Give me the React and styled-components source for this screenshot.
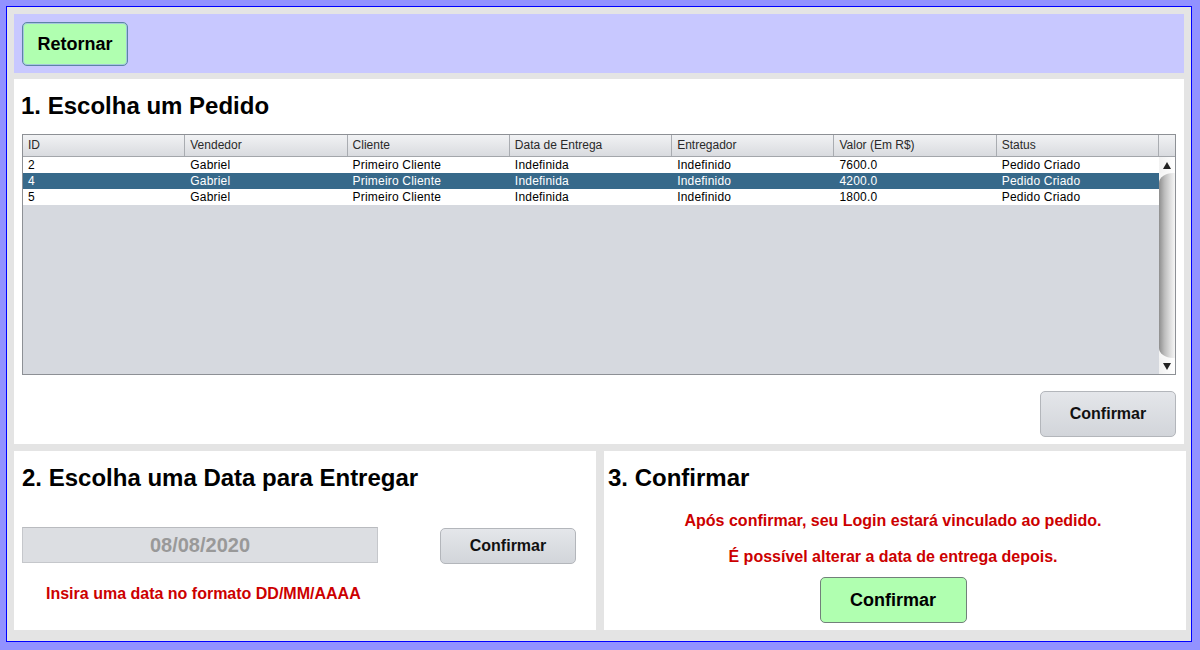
import React from 'react';
import styled, { createGlobalStyle } from 'styled-components';

const GlobalStyle = createGlobalStyle`
  body {
    margin: 0;
    font-family: "Liberation Sans", Arial, sans-serif;
  }
`;

const Frame = styled.div`
  width: 1200px;
  height: 650px;
  box-sizing: border-box;
  padding: 6px 8px 8px 6px;
  background: #9292ff;
`;

const Window = styled.div`
  height: 100%;
  box-sizing: border-box;
  border: 1px solid #0000ff;
  background: #e4e4e4;
  padding: 7px 7px 11px 7px;
  display: flex;
  flex-direction: column;
`;

const TopBar = styled.div`
  height: 59px;
  box-sizing: border-box;
  padding: 8px;
  background: #c8c8ff;
`;

const Panel = styled.div`
  background: #fff;
  box-sizing: border-box;
  padding: 13px 8px 7px ${p => p.$left || 8}px;
  display: flex;
  flex-direction: column;
`;

const OrderPanel = styled(Panel)`
  height: 365px;
  margin-top: 6px;
`;

const BottomRow = styled.div`
  display: grid;
  grid-template-columns: 1fr 1fr;
  gap: 8px;
  height: 179px;
  margin-top: 7px;
  margin-right: -2px;
`;

const Title = styled.h2`
  margin: 0;
  margin-left: ${p => p.$shift || 0}px;
  font-size: 24px;
  line-height: 28px;
  font-weight: bold;
  color: #000;
`;

const GreenButton = styled.button`
  width: ${p => p.$w}px;
  height: ${p => p.$h}px;
  background: #b0ffb0;
  border: 1px solid ${p => (p.$focus ? '#5c84a6' : '#72807a')};
  box-shadow: ${p => (p.$focus ? 'inset 0 0 0 1px #a5c7de' : 'none')};
  border-radius: 5px;
  font-family: "Liberation Sans", Arial, sans-serif;
  font-weight: bold;
  font-size: 18px;
  color: #000;
  padding: 0;
  cursor: pointer;
`;

const GreyButton = styled.button`
  width: 136px;
  height: ${p => p.$h}px;
  background: linear-gradient(#e4e6ea, #d2d5da);
  border: 1px solid #b3b6bb;
  border-radius: 5px;
  font-family: "Liberation Sans", Arial, sans-serif;
  font-weight: bold;
  font-size: 16px;
  color: #111;
  padding: 0;
  cursor: pointer;
`;

const Table = styled.div`
  margin-top: 14px;
  height: 241px;
  box-sizing: border-box;
  border: 1px solid #8d9095;
  display: flex;
  flex-direction: column;
  background: #d6d9df;
`;

const HeaderRow = styled.div`
  display: grid;
  grid-template-columns: repeat(7, 1fr) 16px;
  height: 22px;
  box-sizing: border-box;
  border-bottom: 1px solid #a3a6ab;
  background: linear-gradient(#f1f2f4, #d9dbdf);
`;

const HeaderCell = styled.div`
  border-right: 1px solid #a9acb1;
  padding-left: 5px;
  font-size: 12px;
  line-height: 21px;
  color: #2a2a2a;
  white-space: nowrap;
  overflow: hidden;
`;

const Body = styled.div`
  flex: 1;
  display: flex;
  min-height: 0;
`;

const Rows = styled.div`
  flex: 1;
`;

const Row = styled.div`
  display: grid;
  grid-template-columns: repeat(7, 1fr);
  height: 16px;
  background: ${p => (p.$selected ? '#37698a' : '#fff')};
  color: ${p => (p.$selected ? '#fff' : '#000')};
`;

const Cell = styled.div`
  padding-left: 5px;
  font-size: 12px;
  line-height: 16px;
  letter-spacing: 0.2px;
  white-space: nowrap;
  overflow: hidden;
`;

const ScrollBar = styled.div`
  width: 16px;
  display: flex;
  flex-direction: column;
  background: linear-gradient(to right, #f4f4f4, #ffffff);
`;

const ArrowBox = styled.div`
  height: 16px;
  display: flex;
  align-items: center;
  justify-content: center;
  background: linear-gradient(to right, #f2f2f2, #ffffff);
`;

const Thumb = styled.div`
  flex: 1;
  border-radius: 14px 0 0 14px / 10px 0 0 10px;
  background: linear-gradient(to right, #8e8e8e, #bdbdbd 35%, #e2e2e2 75%, #f6f6f6);
`;

const ConfirmRow = styled.div`
  display: flex;
  justify-content: flex-end;
  margin-top: 16px;
`;

const DateRow = styled.div`
  display: flex;
  align-items: flex-start;
  justify-content: space-between;
  margin-top: 35px;
  padding-right: 12px;
`;

const DateInput = styled.input`
  width: 356px;
  height: 36px;
  box-sizing: border-box;
  margin: 0;
  border: 1px solid #c5c7cb;
  border-top-color: #b9bbbf;
  background: #dcdee2;
  color: #999;
  font-family: "Liberation Sans", Arial, sans-serif;
  font-weight: bold;
  font-size: 20px;
  text-align: center;
  outline: none;
`;

const DateButtonWrap = styled.div`
  margin-top: 1px;
`;

const Warning = styled.p`
  margin: ${p => p.$top}px 0 0 ${p => p.$left || 0}px;
  font-size: 16px;
  line-height: 18px;
  font-weight: bold;
  color: #cc0000;
  text-align: ${p => (p.$center ? 'center' : 'left')};
`;

const CenterButton = styled.div`
  display: flex;
  justify-content: center;
  margin-top: 11px;
`;

const columns = ['ID', 'Vendedor', 'Cliente', 'Data de Entrega', 'Entregador', 'Valor (Em R$)', 'Status'];

const orders = [
  { id: '2', valor: '7600.0' },
  { id: '4', valor: '4200.0' },
  { id: '5', valor: '1800.0' },
];

const Arrow = ({ up }) => (
  <svg width="8" height="7" viewBox="0 0 8 7">
    <path d={up ? 'M4 0 L8 7 L0 7 Z' : 'M0 0 L8 0 L4 7 Z'} fill="#222" />
  </svg>
);

export default function App() {
  return (
    <Frame>
      <GlobalStyle />
      <Window>
        <TopBar>
          <GreenButton $w={106} $h={44} $focus>Retornar</GreenButton>
        </TopBar>

        <OrderPanel>
          <Title $shift={-1}>1. Escolha um Pedido</Title>
          <Table>
            <HeaderRow>
              {columns.map(c => (
                <HeaderCell key={c}>{c}</HeaderCell>
              ))}
              <div />
            </HeaderRow>
            <Body>
              <Rows>
                {orders.map(o => (
                  <Row key={o.id} $selected={o.id === '4'}>
                    <Cell>{o.id}</Cell>
                    <Cell>Gabriel</Cell>
                    <Cell>Primeiro Cliente</Cell>
                    <Cell>Indefinida</Cell>
                    <Cell>Indefinido</Cell>
                    <Cell>{o.valor}</Cell>
                    <Cell>Pedido Criado</Cell>
                  </Row>
                ))}
              </Rows>
              <ScrollBar>
                <ArrowBox><Arrow up /></ArrowBox>
                <Thumb />
                <ArrowBox><Arrow /></ArrowBox>
              </ScrollBar>
            </Body>
          </Table>
          <ConfirmRow>
            <GreyButton $h={46}>Confirmar</GreyButton>
          </ConfirmRow>
        </OrderPanel>

        <BottomRow>
          <Panel>
            <Title>2. Escolha uma Data para Entregar</Title>
            <DateRow>
              <DateInput defaultValue="08/08/2020" />
              <DateButtonWrap>
                <GreyButton $h={36}>Confirmar</GreyButton>
              </DateButtonWrap>
            </DateRow>
            <Warning $top={21} $left={24}>Insira uma data no formato DD/MM/AAAA</Warning>
          </Panel>

          <Panel $left={4}>
            <Title>3. Confirmar</Title>
            <Warning $top={20} $center>Após confirmar, seu Login estará vinculado ao pedido.</Warning>
            <Warning $top={18} $center>É possível alterar a data de entrega depois.</Warning>
            <CenterButton>
              <GreenButton $w={147} $h={46}>Confirmar</GreenButton>
            </CenterButton>
          </Panel>
        </BottomRow>
      </Window>
    </Frame>
  );
}
